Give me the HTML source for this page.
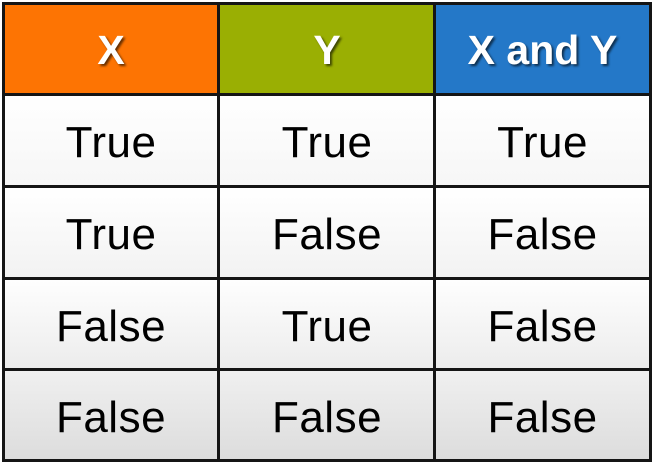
<!DOCTYPE html>
<html><head><style>
body{margin:0;width:653px;height:463px;background:#fff;position:relative;overflow:hidden;font-family:"Liberation Sans",sans-serif}
.c{position:absolute;display:flex;align-items:center;justify-content:center;font-size:44px;color:#000;letter-spacing:0.5px;box-sizing:border-box;padding-top:4px}
.h{color:#fff;font-weight:bold;font-size:41px;letter-spacing:0;text-shadow:2px 2px 2px rgba(0,0,0,.6);padding-top:2px}
.l{position:absolute;background:#151515}
</style></head><body>
<div class="c h" style="left:3px;top:3px;width:216px;height:92px;background:#fd7403">X</div>
<div class="c h" style="left:219px;top:3px;width:216px;height:92px;background:#9aaf03">Y</div>
<div class="c h" style="left:435px;top:3px;width:215px;height:92px;background:#2478c8">X and Y</div>

<div style="position:absolute;left:3px;top:95px;width:647px;height:92px;background:linear-gradient(#fff,#f6f6f6)"></div>
<div style="position:absolute;left:3px;top:187px;width:647px;height:92px;background:linear-gradient(#fff,#f2f2f2)"></div>
<div style="position:absolute;left:3px;top:279px;width:647px;height:91px;background:linear-gradient(#fefefe,#ececec)"></div>
<div style="position:absolute;left:3px;top:370px;width:647px;height:91px;background:linear-gradient(#f0f0f0,#dcdcdc)"></div>

<div class="c" style="left:3px;top:95px;width:216px;height:92px">True</div>
<div class="c" style="left:219px;top:95px;width:216px;height:92px">True</div>
<div class="c" style="left:435px;top:95px;width:215px;height:92px">True</div>
<div class="c" style="left:3px;top:187px;width:216px;height:92px">True</div>
<div class="c" style="left:219px;top:187px;width:216px;height:92px">False</div>
<div class="c" style="left:435px;top:187px;width:215px;height:92px">False</div>
<div class="c" style="left:3px;top:279px;width:216px;height:91px">False</div>
<div class="c" style="left:219px;top:279px;width:216px;height:91px">True</div>
<div class="c" style="left:435px;top:279px;width:215px;height:91px">False</div>
<div class="c" style="left:3px;top:370px;width:216px;height:91px">False</div>
<div class="c" style="left:219px;top:370px;width:216px;height:91px">False</div>
<div class="c" style="left:435px;top:370px;width:215px;height:91px">False</div>

<div class="l" style="left:2px;top:2px;width:650px;height:3px"></div>
<div class="l" style="left:2px;top:93px;width:650px;height:3px"></div>
<div class="l" style="left:2px;top:185px;width:650px;height:3px"></div>
<div class="l" style="left:2px;top:277px;width:650px;height:3px"></div>
<div class="l" style="left:2px;top:368px;width:650px;height:3px"></div>
<div class="l" style="left:2px;top:459px;width:650px;height:3px"></div>
<div class="l" style="left:2px;top:2px;width:3px;height:460px"></div>
<div class="l" style="left:217px;top:2px;width:3px;height:460px"></div>
<div class="l" style="left:433px;top:2px;width:3px;height:460px"></div>
<div class="l" style="left:649px;top:2px;width:3px;height:460px"></div>
</body></html>
